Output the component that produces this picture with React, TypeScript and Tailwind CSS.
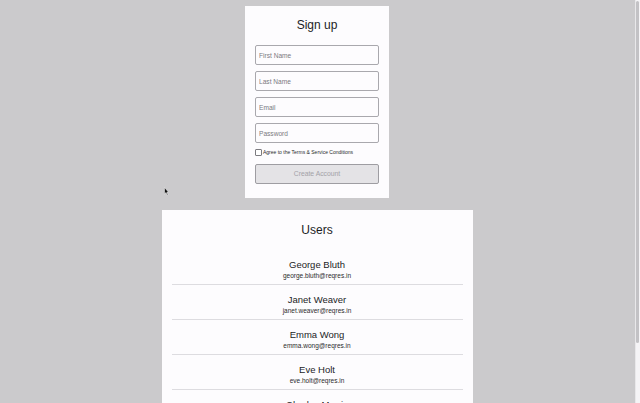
import React from "react";

interface User {
  id: number;
  name: string;
  email: string;
}

const users: User[] = [
  { id: 1, name: "George Bluth", email: "george.bluth@reqres.in" },
  { id: 2, name: "Janet Weaver", email: "janet.weaver@reqres.in" },
  { id: 3, name: "Emma Wong", email: "emma.wong@reqres.in" },
  { id: 4, name: "Eve Holt", email: "eve.holt@reqres.in" },
  { id: 5, name: "Charles Morris", email: "charles.morris@reqres.in" },
  { id: 6, name: "Tracey Ramos", email: "tracey.ramos@reqres.in" },
];

const fields = ["First Name", "Last Name", "Email", "Password"];

const SignUp: React.FC = () => (
  <div className="mt-[6px] flex w-[144px] flex-col bg-[#fdfcfe] px-[10px] pb-[14px] pt-[9px]">
    <h1 className="mb-[10px] text-center text-[12px] leading-[20px] text-[#1c1c1e]">
      Sign up
    </h1>
    <div className="flex flex-col gap-[6px]">
      {fields.map((f) => (
        <input
          key={f}
          type={f === "Password" ? "password" : "text"}
          placeholder={f}
          className="h-[20px] w-full rounded-[2px] border border-[#a9a8ad] bg-[#fdfcfe] px-[3px] text-[6.6px] outline-none placeholder:text-[#7b7a80]"
        />
      ))}
    </div>
    {/* 약관 동의 */}
    <label className="mt-[5px] flex h-[8px] items-center gap-[1px]">
      <span className="h-[7px] w-[7px] rounded-[1px] border border-[#7c7b80] bg-white" />
      <span className="text-[5px] leading-none text-[#2a2a2c]">
        Agree to the Terms &amp; Service Conditions
      </span>
    </label>
    <button
      disabled
      className="mt-[8px] h-[20px] w-full rounded-[2px] border border-[#9e9da2] bg-[#e4e3e6] text-[6.8px] text-[#a3a2a6]"
    >
      Create Account
    </button>
  </div>
);

const Users: React.FC = () => (
  <div className="mt-[12px] flex w-[311px] flex-col bg-[#fdfcfe] px-[10px] pt-[10px]">
    <h2 className="mb-[10px] text-center text-[12px] leading-[20px] text-[#1c1c1e]">
      Users
    </h2>
    {users.map((u) => (
      <div
        key={u.id}
        className="flex flex-col items-center border-b border-[#dddce0] pb-[3px] pt-[9px]"
      >
        <p className="text-[9.5px] leading-[12px] text-[#1c1c1e]">{u.name}</p>
        <p className="text-[6.5px] leading-[10px] text-[#2a2a2c]">{u.email}</p>
      </div>
    ))}
  </div>
);

export default function App() {
  return (
    <div
      className="relative h-screen w-full overflow-hidden bg-[#cbcacc]"
      style={{ fontFamily: '"Liberation Sans", Arial, sans-serif' }}
    >
      <div className="flex h-full flex-col items-center pr-[6px]">
        <SignUp />
        <Users />
      </div>

      {/* 스크롤바 */}
      <div className="absolute right-0 top-0 h-full w-[5px] border-l border-[#e9e8ea] bg-[#f5f4f6]">
        <div className="mt-[1px] h-[342px] w-[3px] rounded-full bg-[#c3c2c5]" />
      </div>

      {/* 마우스 커서 */}
      <svg
        className="absolute left-[164px] top-[187px]"
        width="5"
        height="9"
        viewBox="0 0 5 9"
      >
        <path d="M0.5 0.5 L0.5 7 L2 5.6 L3.2 8.3 L4 7.9 L2.9 5.3 L4.6 5.3 Z" fill="#111" stroke="#fff" strokeWidth="0.5" />
      </svg>
    </div>
  );
}
